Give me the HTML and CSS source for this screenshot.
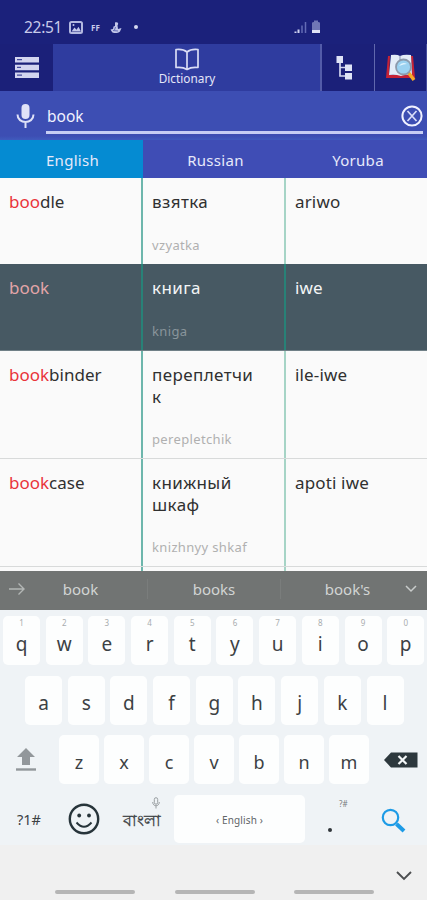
FILE: index.html
```
<!DOCTYPE html>
<html lang="en">
<head>
<meta charset="utf-8">
<title>Dictionary</title>
<link rel="stylesheet" href="styles.css">
</head>
<body>
<div class="phone">
  <header class="status">
    <span class="clock">22:51</span>
    <svg class="s-pic" width="14" height="13" viewBox="0 0 14 13"><rect x="1" y="1" width="12" height="11" rx="1.5" fill="none" stroke="#b3b8e0" stroke-width="2"/><path d="M2.500 10.500l3-4 2 2.200 2-3 2.500 4.800z" fill="#c3c7ea"/><circle cx="4.500" cy="4" r="1" fill="#c3c7ea"/></svg>
    <span class="ff">FF</span>
    <svg class="s-boat" width="12" height="13" viewBox="0 0 12 13"><path d="M5 1.500c3-1 4 1 2.500 3L8 8l3.500-1-1.500 3.500c-2 2-7 2-8 .5L.5 8.500 3 8l.5-2.500L5 5z" fill="#c3c7ea"/><path d="M5.500 6L4.500 9M3 9.500l5 .5" stroke="#6770b8"/></svg>
    <span class="dot"></span>
    <svg class="s-signal" width="13" height="13" viewBox="0 0 13 13"><path d="M1.500 12v-1.500M4.500 12V8.500" stroke="#d0d3f0" stroke-width="2"/><path d="M8 12V4.500M11.500 12V1" stroke="#636bb5" stroke-width="1.500"/></svg>
    <svg class="s-batt" width="10" height="14" viewBox="0 0 10 14"><path d="M1 3q0-1 2-1V.5h4V2q2 0 2 1v7H1z" fill="#7077b5"/><path d="M1 10h8v3H1z" fill="#e0e2f5"/></svg>
  </header>
  <nav class="tabs">
    <div class="tab menu"><svg width="26" height="23" viewBox="0 0 26 23"><path d="M1 1h24v5.500H1zM1 8.700h24v5.500H1zM1 16.400h24v5.500H1z" fill="#d3d5ef"/><path d="M3 3.700h5M3 11.400h4M3 19.200h5" stroke="#454b9c" stroke-width="1.300"/></svg></div>
    <div class="tab main"><svg width="26" height="23" viewBox="0 0 26 23"><path d="M13 4C10 1.500 6 1 2 1.500v18c4-.5 8 0 11 2 3-2 7-2.500 11-2v-18c-4-.5-8 0-11 2.500zM13 4v17" fill="none" stroke="#d9dcf5" stroke-width="1.700" stroke-linejoin="round"/></svg><span>Dictionary</span></div>
    <div class="tab tree"><svg width="17" height="26" viewBox="0 0 17 26"><path d="M4 6v15h7M4 12.500h7" fill="none" stroke="#d3d7f0" stroke-width="1.700"/><path d="M.5 1H7v7H.5zM9 9.500h7v6.500H9zM9 18h7v6.500H9z" fill="#dfe3f7"/></svg></div>
    <div class="tab find"><svg width="31" height="30" viewBox="0 0 31 30"><path d="M3 3h2l-1 19h23L26 3h2l2 22H1z" fill="#c52236"/><path d="M6 2q6-1 9 1 4-2 11-1l1 20q-7-1-11 1-6-2-12-1z" fill="#e4edf8"/><path d="M15 3v18" stroke="#8795b5"/><path d="M23 19l6 8" stroke="#f7a928" stroke-width="3.500"/><circle cx="18.500" cy="14" r="7.500" fill="#9bd2f1" stroke="#8c9aac" stroke-width="1.800"/><path d="M14 13q3-5 8-2-3 0-8 2z" fill="#dff4ff"/></svg></div>
  </nav>
  <section class="search">
    <svg class="mic" width="19" height="26" viewBox="0 0 19 26"><rect x="5.500" y="1" width="8" height="15" rx="4" fill="#dfe2f8"/><path d="M1.500 11.500c0 10 16 10 16 0M9.500 19v6" fill="none" stroke="#dfe2f8" stroke-width="2"/></svg>
    <div class="field"><span>book</span></div>
    <svg class="clear" width="22" height="22" viewBox="0 0 22 22"><circle cx="11" cy="11" r="9.600" fill="none" stroke="#f0f1ff" stroke-width="2"/><path d="M6.500 6l9 10M15.500 6l-9 10" stroke="#d8dcf8" stroke-width="1.700"/></svg>
  </section>
  <div class="langs"><div class="active">English</div><div>Russian</div><div>Yoruba</div></div>
  <main class="words">
    <div class="row"><div class="cell"><p><b>boo</b>dle</p></div><div class="cell"><p class="ru">взятка</p><small>vzyatka</small></div><div class="cell"><p>ariwo</p></div></div>
    <div class="row selected"><div class="cell"><p><b>book</b></p></div><div class="cell"><p class="ru">книга</p><small>kniga</small></div><div class="cell"><p>iwe</p></div></div>
    <div class="row"><div class="cell"><p><b>book</b>binder</p></div><div class="cell"><p class="ru">переплетчи<br>к</p><small>perepletchik</small></div><div class="cell"><p>ile-iwe</p></div></div>
    <div class="row"><div class="cell"><p><b>book</b>case</p></div><div class="cell"><p class="ru">книжный<br>шкаф</p><small>knizhnyy shkaf</small></div><div class="cell"><p>apoti iwe</p></div></div>
    <div class="row rest"><div class="cell"></div><div class="cell"></div><div class="cell"></div></div>
  </main>
  <section class="suggest">
    <svg width="18" height="14" viewBox="0 0 18 14"><path d="M1 7h15M10.500 1.500L16 7l-5.500 5.500" fill="none" stroke="#b3b6b5" stroke-width="1.400"/></svg>
    <span>book</span><span>books</span><span>book's</span>
    <svg width="14" height="10" viewBox="0 0 14 10"><path d="M2 2l5 5 5-5" fill="none" stroke="#c9cccb" stroke-width="1.500"/></svg>
  </section>
  <section class="keyboard">
    <div class="keys k1"><div class="key"><i>1</i>q</div><div class="key"><i>2</i>w</div><div class="key"><i>3</i>e</div><div class="key"><i>4</i>r</div><div class="key"><i>5</i>t</div><div class="key"><i>6</i>y</div><div class="key"><i>7</i>u</div><div class="key"><i>8</i>i</div><div class="key"><i>9</i>o</div><div class="key"><i>0</i>p</div></div>
    <div class="keys k2"><div class="key">a</div><div class="key">s</div><div class="key">d</div><div class="key">f</div><div class="key">g</div><div class="key">h</div><div class="key">j</div><div class="key">k</div><div class="key">l</div></div>
    <div class="keys k3">
      <div class="fn"><svg width="20" height="25" viewBox="0 0 20 25"><path d="M10 1l9 9h-5v8H6v-8H1z" fill="#92979b"/><path d="M0 22.500h20" stroke="#92979b" stroke-width="2.400"/></svg></div>
      <div class="key">z</div><div class="key">x</div><div class="key">c</div><div class="key">v</div><div class="key">b</div><div class="key">n</div><div class="key">m</div>
      <div class="fn"><svg width="34" height="16" viewBox="0 0 34 16"><path d="M0 8l7-7.500h26.500v15H7z" fill="#2d383d"/><path d="M14.500 4l8 8M22.500 4l-8 8" stroke="#f4f7f8" stroke-width="2.200"/></svg></div>
    </div>
    <div class="keys k4">
      <div class="sym">?1#</div>
      <div class="smile"><svg width="32" height="32" viewBox="0 0 32 32"><circle cx="16" cy="16" r="14.200" fill="none" stroke="#27343a" stroke-width="2.400"/><circle cx="11.200" cy="12.500" r="1.900" fill="#27343a"/><circle cx="21" cy="12.500" r="1.900" fill="#27343a"/><path d="M8.500 19.500q7.500 8.500 15 0" fill="none" stroke="#27343a" stroke-width="1.900"/></svg></div>
      <div class="bangla"><svg width="8" height="12" viewBox="0 0 8 12"><rect x="2.300" y=".7" width="3.400" height="6.500" rx="1.700" fill="none" stroke="#999ea1"/><path d="M.7 5c0 5 6.600 5 6.600 0M4 9v2.500" fill="none" stroke="#999ea1"/></svg><span>বাংলা</span></div>
      <div class="key space">‹ English ›</div>
      <div class="period"><i>?#</i><span></span></div>
      <div class="go"><svg width="25" height="25" viewBox="0 0 25 25"><circle cx="9.500" cy="9.500" r="7.700" fill="none" stroke="#1d9be6" stroke-width="2.200"/><path d="M15.500 16l7.500 7" stroke="#1d9be6" stroke-width="4"/></svg></div>
    </div>
  </section>
  <footer class="navbar">
    <svg width="18" height="12" viewBox="0 0 18 12"><path d="M2 2l7 7 7-7" fill="none" stroke="#4c4e50" stroke-width="1.900"/></svg>
    <div class="bars"><span></span><span></span><span></span></div>
  </footer>
</div>
</body>
</html>
```
FILE: styles.css
```
* { box-sizing: border-box; }
body { margin: 0; font-family: "Noto Sans", "Open Sans", sans-serif; }
svg { display: block; flex: none; }
p { margin: 0; }
i { font-style: normal; }
.phone { width: 427px; height: 900px; overflow: hidden; display: flex; flex-direction: column; }
.phone > * { flex: none; }

.status { height: 44px; background: #1b217b; display: flex; align-items: center; padding: 10px 0 0 24px; color: #c8cbea; }
.clock { font-size: 15.5px; width: 45px; letter-spacing: -.3px; }
.ff { font-size: 8px; font-weight: 700; margin-left: 8px; width: 11px; }
.s-boat { margin-left: 8px; }
.dot { width: 4px; height: 4px; border-radius: 50%; background: #d5d8f0; margin-left: 12px; }
.s-signal { margin-left: 156px; }
.s-batt { margin-left: 4px; }

.tabs { height: 47px; display: flex; background: #1b2079; }
.tab { display: flex; align-items: center; justify-content: center; }
.menu { width: 53px; }
.main { width: 269px; background: #2f3c9f; border-right: 2px solid #535ba9; flex-direction: column; justify-content: flex-start; padding: 4px 0 0 1px; color: #e4e6f8; font-size: 11.8px; line-height: 16px; }
.main span { margin-top: -1px; }
.tree { width: 53px; border-right: 1px solid #6168ad; padding-right: 7px; }
.find { width: 52px; border-right: 1px solid #454c9b; }

.search { height: 49px; background: linear-gradient(#3d4eb3 0 45px, #405bbd); display: flex; padding-left: 16px; }
.mic { margin-top: 12px; }
.field { width: 377px; margin-left: 11px; height: 43px; border-bottom: 3px solid #c6cef4; color: #f0f2ff; font-size: 15.5px; line-height: 24px; padding: 13px 0 0 1px; flex: none; }
.clear { margin: 13.5px 0 0 -22.5px; }

.langs { height: 38px; display: grid; grid-template-columns: 143px 143px 141px; background: #3f4db5; color: #e6e9fa; font-size: 15px; letter-spacing: .3px; line-height: 40px; text-align: center; }
.langs div { padding-left: 2px; }
.langs .active { background: #058bd2; }
.langs div:nth-child(3) { padding-left: 3px; }

.words { height: 393px; overflow: hidden; background: #fafafa; }
.row { display: grid; grid-template-columns: 143px 143px 141px; border-bottom: 1px solid #d8dada; min-height: 86px; }
.row:nth-child(1) { border-bottom: 0; }
.cell { padding: 13px 0 9px 9px; font-size: 17px; line-height: 22px; color: #303030; border-right: 2px solid #6db6ac; }
.cell + .cell { border-right-color: #a6d4c6; }
.cell + .cell + .cell { border-right: 0; letter-spacing: .15px; }
.cell b { font-weight: 400; color: #e9343b; }
.cell .ru { letter-spacing: .4px; }
.cell small { display: block; margin-top: 21px; font-size: 13px; letter-spacing: .35px; line-height: 20px; color: #b0b0b0; }
.row:nth-child(-n+2) small { margin-top: 22px; }
.selected { background: #475963; border-bottom-color: #708087; }
.selected .cell { color: #f3f5f6; border-right-color: #288177; }
.selected b { color: #e2a5a8; }
.selected small { color: #89959b; }

.suggest { height: 39px; background: #717473; color: #d2d5d4; display: grid; grid-template-columns: 18px 122px 133px 133px 14px; align-items: center; padding: 0 0 3px 8px; font-size: 15px; text-align: center; }
.suggest span { border-right: 1px solid #7a7d7c; line-height: 20px; }
.suggest span:nth-of-type(1) { padding-right: 12px; }
.suggest span:nth-of-type(3) { border: 0; }
.suggest svg:last-child { margin-left: -10px; }

.keyboard { height: 235px; padding-top: 6px; background: #eff3f6; color: #3c4144; }
.keys { display: flex; }
.key { background: #fdfefe; border-radius: 5px; height: 49px; display: flex; align-items: center; justify-content: center; font-size: 19px; line-height: 24px; position: relative; padding-top: 4px; }
.key i { position: absolute; top: 1px; left: 0; right: 0; text-align: center; font-size: 8px; line-height: 12px; color: #a8acae; }
.k1 { gap: 5.7px; padding-left: 3px; }
.k1 .key { width: 37px; padding-top: 7px; }
.k2 { gap: 5.7px; padding-left: 25px; margin-top: 11px; }
.k2 .key { width: 37px; }
.k3 { gap: 5px; margin-top: 10px; align-items: center; }
.k3 .key { width: 40px; font-size: 18px; padding-top: 5px; }
.fn:first-child { width: 54px; padding-left: 16px; }
.fn:last-child { padding-left: 10px; }
.k4 { margin-top: 11px; height: 49px; }
.k4 > div { flex: none; }
.sym { width: 68px; padding-left: 17px; font-size: 14.5px; line-height: 49px; }
.smile { width: 55px; padding-top: 8px; }
.bangla { width: 51px; font-size: 15.5px; font-weight: 500; line-height: 22px; position: relative; padding-top: 14px; -webkit-text-stroke: .3px #3c4144; }
.bangla svg { position: absolute; left: 29px; top: 2px; }
.k4 .space { width: 131px; height: 48px; font-size: 10px; letter-spacing: .15px; color: #606568; padding-top: 2px; }
.period { width: 76px; position: relative; padding: 33px 0 0 23px; }
.period span { display: block; width: 4px; height: 4px; border-radius: 2px; background: #30363a; }
.period i { position: absolute; top: 3px; left: 34px; font-size: 8px; line-height: 12px; color: #777b7e; }
.go { padding-top: 13px; }

.navbar { height: 55px; background: #f0f0f0; display: flex; flex-direction: column; align-items: flex-end; padding: 25px 14px 0 0; }
.bars { align-self: flex-start; display: flex; gap: 39.5px; margin: 8px 0 0 55px; }
.bars span { width: 80px; height: 4px; border-radius: 2px; background: #b5b5b5; }
```
